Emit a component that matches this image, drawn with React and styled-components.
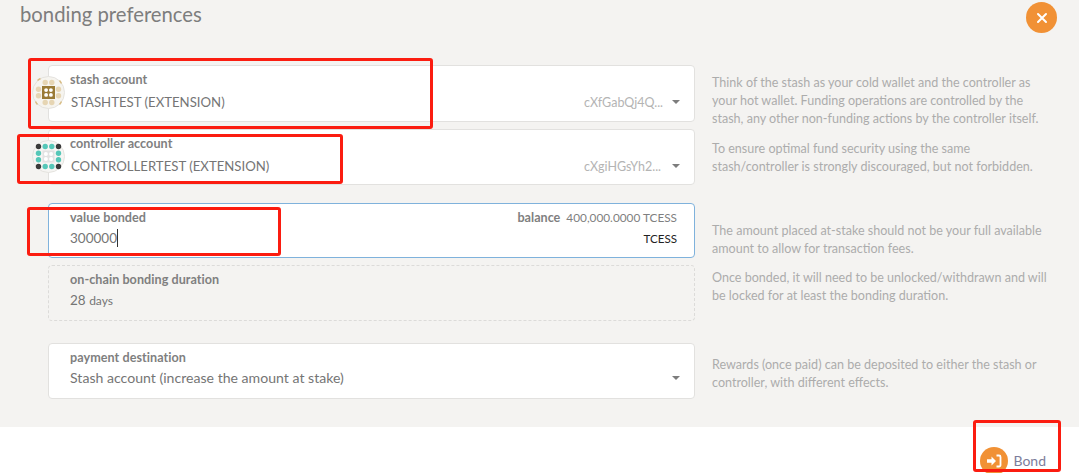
import React from "react";
import styled, { createGlobalStyle } from "styled-components";

const Global = createGlobalStyle`
  html, body { margin: 0; padding: 0; background: #fff; height: 473px; overflow: hidden; }
  body { font-family: Lato, "Open Sans", sans-serif; }
`;
const Page = styled.div`position: relative; width: 1079px; height: 473px; overflow: hidden; background: #fff;`;
const Panel = styled.div`height: 427px; box-sizing: border-box; background: #f4f3f1; padding: 0 0 0 20px;`;
const Header = styled.div`display: flex; justify-content: space-between; height: 65px; padding-right: 22px;`;
const Title = styled.h1`margin: 1px 0 0; font-size: 20.3px; line-height: 26px; font-weight: 400; color: #7d7d7d;`;
const Close = styled.button`
  width: 31px; height: 31px; margin-top: 2px; border: 0; padding: 0; border-radius: 50%; background: #f19135;
  display: flex; align-items: center; justify-content: center;
`;
const Rows = styled.div`display: flex; flex-direction: column; padding-left: 28px;`;
const Row = styled.div`
  display: grid; grid-template-columns: 647px 340px; grid-template-rows: ${p => p.$h}px; align-items: start;
  column-gap: 17px; margin-top: ${p => p.$top || 0}px;
`;
const Field = styled.div`
  position: relative; box-sizing: border-box; height: 100%; padding: 5px 17px 0 21px;
  background: ${p => (p.$dashed ? "transparent" : "#fff")};
  border: 1px ${p => (p.$dashed ? "dashed" : "solid")} ${p => (p.$focus ? "#7fb2dc" : p.$dashed ? "#dcdbd9" : "#e2e1df")};
  border-radius: 4px;
`;
const LabelRow = styled.div`display: flex; justify-content: space-between; height: 18px;`;
const Label = styled.label`font-size: 12.6px; line-height: 18px; font-weight: 700; color: #7f7f7f; letter-spacing: 0.05px;`;
const Balance = styled.span`font-size: 11.8px; line-height: 18px; color: #7f7f7f; white-space: pre;`;
const BalanceLabel = styled.b`font-size: 12.6px; font-weight: 700;`;
const ValueRow = styled.div`display: flex; justify-content: space-between; align-items: center; height: 24px; margin-top: ${p => p.$gap}px;`;
const Value = styled.span`font-size: ${p => p.$size || 14}px; line-height: 24px; color: #757575; padding-left: ${p => p.$inset || 0}px;`;
const Small = styled.span`font-size: 12px;`;
const Caret = styled.span`display: inline-block; width: 1px; height: 18px; background: #333; vertical-align: -4px;`;
const Right = styled.div`display: flex; align-items: center; gap: 12px;`;
const Address = styled.span`font-size: 12.5px; color: #b4b4b4; width: 76px;`;
const Arrow = styled.span`width: 0; height: 0; border: 4px solid transparent; border-top: 4px solid #7d7d7d; border-bottom: 0; margin-right: -3px;`;
const Unit = styled.span`font-size: 11.6px; color: #222;`;
const Help = styled.p`margin: 0; padding-top: ${p => p.$top}px; font-size: 12.55px; line-height: 18px; color: #acacac;`;
const IconSlot = styled.div`position: absolute; left: -17px; top: ${p => p.$top}px; width: 33px; height: 33px;`;
const Footer = styled.div`display: flex; justify-content: flex-end; padding: 20px 33px 0 0;`;
const BondButton = styled.button`
  display: flex; align-items: center; gap: 5px; padding: 0; border: 0; background: none; height: 28px;
  font: 400 14px Lato, sans-serif; color: #7d7d9b;
`;
const BondText = styled.span`position: relative; top: -1px;`;
const BondIcon = styled.span`
  width: 28px; height: 28px; border-radius: 50%; background: #f19135; display: flex; align-items: center; justify-content: center;
`;
const Mark = styled.div`
  position: absolute; box-sizing: border-box; left: ${p => p.$l}px; top: ${p => p.$t}px; width: ${p => p.$w}px; height: ${p => p.$h}px;
  border: 3px solid #fb1c10; border-radius: 3px; pointer-events: none;
`;

const pos = [-10, -3.3, 3.3, 10];
const Dot = ({ x, y, fill, r = 2.7 }) => <circle cx={x} cy={y} r={r} fill={fill} />;

const StashIcon = () => (
  <svg width="33" height="33" viewBox="-16.5 -16.5 33 33">
    <circle r="16" fill="#f6f4ef" stroke="#e4e2de" />
    {[-3.3, 3.3].flatMap(x => [-10, 10].map(y => <Dot key={x + "," + y} x={x} y={y} fill="#e6d5b3" />))}
    {[-10, 10].flatMap(x => [-3.3, 3.3].map(y => <Dot key={x + ";" + y} x={x} y={y} fill="#e6d5b3" />))}
    <rect x="-6.5" y="-6.5" width="13" height="13" fill="#9a7a35" />
    {[-2.4, 2.4].flatMap(x => [-2.4, 2.4].map(y => <Dot key={x + ":" + y} x={x} y={y} fill="#fff" r="1.9" />))}
    <path d="M-11 -12 A16 16 0 0 1 -8 -14 M11 -12 A16 16 0 0 1 13 -9 M-13 9 A16 16 0 0 0 -11 12 M11 12 A16 16 0 0 0 13 9" stroke="#d8bd85" strokeWidth="1.5" fill="none" />
  </svg>
);
const ControllerIcon = () => (
  <svg width="33" height="33" viewBox="-16.5 -16.5 33 33">
    <circle r="16" fill="#f6f5f3" stroke="#e4e2de" />
    {pos.flatMap(y => pos.map(x => {
      const corner = Math.abs(x) === 10 && Math.abs(y) === 10;
      const inner = Math.abs(x) < 5 && Math.abs(y) < 5;
      return inner ? null : <Dot key={x + "," + y} x={x} y={y} fill={corner ? "#3a3a3a" : "#56c7b8"} />;
    }))}
    <rect x="-6" y="-6" width="12" height="12" fill="#e2e2e2" />
    {[-2.6, 2.6].flatMap(x => [-2.6, 2.6].map(y => <Dot key={x + ":" + y} x={x} y={y} fill="#fff" r="2" />))}
  </svg>
);

const AccountField = ({ label, name, address, icon }) => (
  <Field>
    <IconSlot $top={10}>{icon}</IconSlot>
    <LabelRow><Label>{label}</Label></LabelRow>
    <ValueRow $gap={1}>
      <Value $inset={1} $size={13.2}>{name}</Value>
      <Right><Address>{address}</Address><Arrow /></Right>
    </ValueRow>
  </Field>
);

export default function App() {
  return (
    <Page>
      <Global />
      <Panel>
        <Header>
          <Title>bonding preferences</Title>
          <Close aria-label="close">
            <svg width="12" height="12" viewBox="0 0 12 12"><path d="M2 2 L10 10 M10 2 L2 10" stroke="#fff" strokeWidth="2" strokeLinecap="round" /></svg>
          </Close>
        </Header>
        <Rows>
          <Row $h={57}>
            <AccountField label="stash account" name="STASHTEST (EXTENSION)" address="cXfGabQj4Q..." icon={<StashIcon />} />
            <Help $top={9}>Think of the stash as your cold wallet and the controller as your hot wallet. Funding operations are controlled by the stash, any other non-funding actions by the controller itself.</Help>
          </Row>
          <Row $h={56} $top={7}>
            <AccountField label="controller account" name="CONTROLLERTEST (EXTENSION)" address="cXgiHGsYh2..." icon={<ControllerIcon />} />
            <Help $top={11}>To ensure optimal fund security using the same stash/controller is strongly discouraged, but not forbidden.</Help>
          </Row>
          <Row $h={55} $top={18}>
            <Field $focus>
              <LabelRow>
                <Label>value bonded</Label>
                <Balance><BalanceLabel>balance</BalanceLabel>  400,000.0000 TCESS</Balance>
              </LabelRow>
              <ValueRow $gap={-1}>
                <Value $size={13.5}>300000<Caret /></Value>
                <Unit>TCESS</Unit>
              </ValueRow>
            </Field>
            <Help $top={19}>The amount placed at-stake should not be your full available amount to allow for transaction fees.</Help>
          </Row>
          <Row $h={56} $top={7}>
            <Field $dashed>
              <LabelRow><Label>on-chain bonding duration</Label></LabelRow>
              <ValueRow $gap={-1}><Value $size={13.5}>28 <Small>days</Small></Value></ValueRow>
            </Field>
            <Help $top={4}>Once bonded, it will need to be unlocked/withdrawn and will be locked for at least the bonding duration.</Help>
          </Row>
          <Row $h={56} $top={22}>
            <Field>
              <LabelRow><Label>payment destination</Label></LabelRow>
              <ValueRow $gap={-1}>
                <Value $size={14.1}>Stash account (increase the amount at stake)</Value>
                <Right><Arrow /></Right>
              </ValueRow>
            </Field>
            <Help $top={13}>Rewards (once paid) can be deposited to either the stash or controller, with different effects.</Help>
          </Row>
        </Rows>
      </Panel>
      <Footer>
        <BondButton>
          <BondIcon>
            <svg width="16" height="14" viewBox="0 0 16 14">
              <path d="M1 5.2 H5.5 V2.5 L10 7 L5.5 11.5 V8.8 H1 Z" fill="#fff" />
              <path d="M10.5 1.5 H13 A1.5 1.5 0 0 1 14.5 3 V11 A1.5 1.5 0 0 1 13 12.5 H10.5" stroke="#fff" strokeWidth="1.8" fill="none" />
            </svg>
          </BondIcon>
          <BondText>Bond</BondText>
        </BondButton>
      </Footer>
      <Mark $l={28} $t={58} $w={405} $h={71} />
      <Mark $l={17} $t={134} $w={326} $h={50} />
      <Mark $l={27} $t={207} $w={254} $h={49} />
      <Mark $l={973} $t={420} $w={88} $h={52} />
    </Page>
  );
}
